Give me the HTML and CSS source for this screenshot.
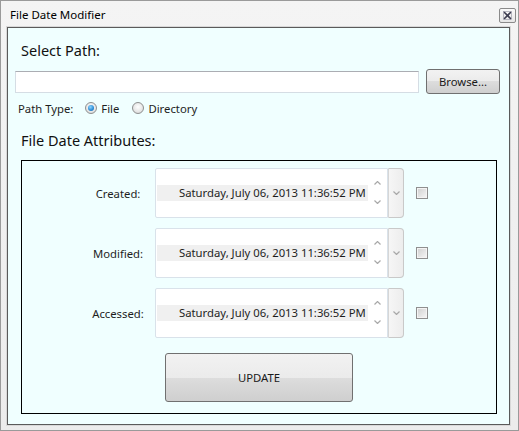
FILE: index.html
```html
<!DOCTYPE html>
<html>
<head>
<meta charset="utf-8">
<link rel="stylesheet" href="styles.css">
</head>
<body>
<div class="window">
  <div class="titlebar">
    <span class="title">File Date Modifier</span>
    <span class="close"><svg width="9" height="9" viewBox="0 0 9 9"><path d="M1 1L8 8M8 1L1 8" stroke="#3c3c50" stroke-width="1.6"/><rect x="0.5" y="0.5" width="8" height="8" fill="none" stroke="#9090a0" stroke-width="0.6"/></svg></span>
  </div>
  <div class="panel">
    <div class="heading h1">Select Path:</div>
    <div class="pathrow">
      <div class="textbox"></div>
      <div class="btn browse">Browse...</div>
    </div>
    <div class="typerow">
      <span class="typelabel">Path Type:</span>
      <span class="radio checked"></span><span class="rlabel">File</span>
      <span class="radio"></span><span class="rlabel">Directory</span>
    </div>
    <div class="heading h2">File Date Attributes:</div>
    <div class="group">
      <div class="row">
        <span class="label">Created:</span>
        <div class="picker">
          <div class="field">
            <div class="strip">Saturday, July 06, 2013 11:36:52 PM</div>
            <div class="spin"><svg width="7" height="4" viewBox="0 0 7 4"><path d="M0.5 3.5L3.5 0.5L6.5 3.5" fill="none" stroke="#a8a8a8" stroke-width="1.2"/></svg><svg width="7" height="4" viewBox="0 0 7 4"><path d="M0.5 0.5L3.5 3.5L6.5 0.5" fill="none" stroke="#a8a8a8" stroke-width="1.2"/></svg></div>
          </div>
          <div class="drop"><svg width="7" height="4" viewBox="0 0 7 4"><path d="M0.5 0.5L3.5 3.5L6.5 0.5" fill="none" stroke="#a8a8a8" stroke-width="1.2"/></svg></div>
        </div>
        <span class="check"></span>
      </div>
      <div class="row">
        <span class="label">Modified:</span>
        <div class="picker">
          <div class="field">
            <div class="strip">Saturday, July 06, 2013 11:36:52 PM</div>
            <div class="spin"><svg width="7" height="4" viewBox="0 0 7 4"><path d="M0.5 3.5L3.5 0.5L6.5 3.5" fill="none" stroke="#a8a8a8" stroke-width="1.2"/></svg><svg width="7" height="4" viewBox="0 0 7 4"><path d="M0.5 0.5L3.5 3.5L6.5 0.5" fill="none" stroke="#a8a8a8" stroke-width="1.2"/></svg></div>
          </div>
          <div class="drop"><svg width="7" height="4" viewBox="0 0 7 4"><path d="M0.5 0.5L3.5 3.5L6.5 0.5" fill="none" stroke="#a8a8a8" stroke-width="1.2"/></svg></div>
        </div>
        <span class="check"></span>
      </div>
      <div class="row">
        <span class="label">Accessed:</span>
        <div class="picker">
          <div class="field">
            <div class="strip">Saturday, July 06, 2013 11:36:52 PM</div>
            <div class="spin"><svg width="7" height="4" viewBox="0 0 7 4"><path d="M0.5 3.5L3.5 0.5L6.5 3.5" fill="none" stroke="#a8a8a8" stroke-width="1.2"/></svg><svg width="7" height="4" viewBox="0 0 7 4"><path d="M0.5 0.5L3.5 3.5L6.5 0.5" fill="none" stroke="#a8a8a8" stroke-width="1.2"/></svg></div>
          </div>
          <div class="drop"><svg width="7" height="4" viewBox="0 0 7 4"><path d="M0.5 0.5L3.5 3.5L6.5 0.5" fill="none" stroke="#a8a8a8" stroke-width="1.2"/></svg></div>
        </div>
        <span class="check"></span>
      </div>
      <div class="btnrow">
        <div class="btn update">UPDATE</div>
      </div>
    </div>
  </div>
</div>
</body>
</html>
```
FILE: styles.css
```css
* { box-sizing: border-box; }
html, body { margin: 0; padding: 0; background: #ffffff; }
body { font-family: "Noto Sans", "Open Sans", sans-serif; font-size: 11.3px; color: #1e1e1e; }

.window {
  width: 519px; height: 431px;
  border: 1px solid #9a9a9a;
  background: linear-gradient(#f4f4f4, #ececec);
  padding: 0 8px 5px 6px;
  display: flex; flex-direction: column;
}
.titlebar {
  height: 26px; display: flex; align-items: center; justify-content: space-between;
  padding-left: 3px; padding-top: 1px;
}
.title { font-size: 11.5px; color: #000; }
.close {
  width: 17px; height: 15px; margin-right: -6px; margin-top: 2px;
  border: 1px solid #8a8a8a; border-radius: 2px;
  background: linear-gradient(#fafafa, #e6e6e6);
  display: flex; align-items: center; justify-content: center;
}
.panel {
  flex: 1;
  border: 1px solid #5a5a5a;
  box-shadow: 0 0 0 1px #d8d8d8;
  background: #f0ffff;
  padding: 0 7px;
}
.heading { font-size: 14.5px; color: #111; margin-left: 6px; line-height: 20px; }
.h1 { margin-top: 12px; }
.pathrow { display: flex; align-items: center; margin-top: 9px; gap: 7px; }
.textbox {
  width: 404px; height: 22px; background: #fff;
  border: 1px solid #d5dde4; border-top-color: #abadb3;
}
.btn {
  border: 1px solid #707070; border-radius: 3px;
  background: linear-gradient(#f2f2f2 0%, #ebebeb 50%, #dddddd 50%, #cfcfcf 100%);
  display: flex; align-items: center; justify-content: center; color: #1a1a1a;
}
.browse { width: 74px; height: 25px; }
.typerow { display: flex; align-items: center; margin-top: 4px; height: 20px; padding-left: 3px; }
.typelabel { margin-right: 12px; }
.radio {
  width: 12px; height: 12px; border-radius: 50%;
  border: 1px solid #8e8f8f;
  background: radial-gradient(circle at 50% 40%, #ffffff 0%, #e6e6e6 60%, #cfcfcf 100%);
  margin-right: 4px;
  position: relative;
}
.radio.checked::after {
  content: ""; position: absolute; left: 2px; top: 2px; width: 6px; height: 6px; border-radius: 50%;
  background: radial-gradient(circle at 40% 35%, #8fd6ff 0%, #2a8ad4 60%, #195f9f 100%);
}
.rlabel { margin-right: 13px; }
.h2 { margin-top: 12px; }
.group {
  margin: 10px 5px 0 6px;
  border: 1px solid #000;
  height: 254px;
  padding: 7px 0 0 66px;
  display: flex; flex-direction: column; gap: 10px;
}
.row { display: flex; align-items: center; height: 50px; }
.label { width: 60px; text-align: center; margin-right: 7px; }
.picker { display: flex; width: 249px; height: 50px; }
.field {
  flex: 1; display: flex; align-items: center;
  background: #fff; border: 1px solid #d9e2ea; border-radius: 2px 0 0 2px;
  padding-left: 1px;
}
.strip {
  width: 211px; height: 16px; background: #f0f0f0; flex: none;
  padding-left: 22px; line-height: 16px; white-space: nowrap; color: #1e1e1e; overflow: hidden;
}
.spin {
  flex: 1; display: flex; flex-direction: column; align-items: center; justify-content: space-between;
  height: 30px; padding: 3px 0 4px;
}
.spin svg, .drop svg { display: block; }
.drop {
  width: 16px; height: 50px;
  border: 1px solid #c9c9c9; border-left-color: #d6d6d6;
  border-radius: 0 4px 4px 0;
  background: linear-gradient(90deg, #f6f6f6, #ededed);
  display: flex; align-items: center; justify-content: center;
}
.check {
  width: 12px; height: 12px; margin-left: 12px;
  border: 1px solid #8f8f8f;
  background: linear-gradient(135deg, #cfcfcf, #f7f7f7);
  box-shadow: inset 0 0 0 1px #f4f4f4;
}
.btnrow { display: flex; padding-left: 77px; margin-top: 5px; }
.update { width: 188px; height: 49px; }
```
